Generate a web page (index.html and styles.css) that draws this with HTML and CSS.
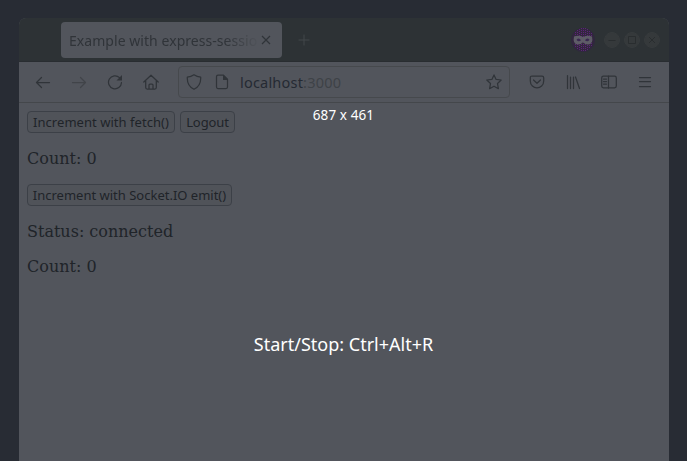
FILE: index.html
```html
<!DOCTYPE html>
<html lang="en">
<head>
<meta charset="utf-8">
<title>Example with express-session</title>
<link rel="stylesheet" href="styles.css">
</head>
<body>
<div class="window">
  <header class="titlebar">
    <div class="tab"><span class="tab-title">Example with express-session</span>
      <svg class="tab-close" width="10" height="10" viewBox="0 0 10 10"><path d="M1 1l8 8M9 1L1 9"/></svg>
    </div>
    <svg class="new-tab" width="12" height="12" viewBox="0 0 12 12"><path d="M6 .5v11M.5 6h11"/></svg>
    <div class="controls">
      <svg class="mask" width="26" height="26" viewBox="0 0 26 26">
        <circle cx="13" cy="13" r="12" fill="#30283f"/>
        <circle class="weave" cx="13" cy="12.500" r="11"/>
        <path class="weave-lines" d="M5.500 5v16M7.500 3v20M9.500 2v22M11.500 1v23M13.500 1v23M15.500 1v23M17.500 2v22M19.500 4v18M21.500 6v14"/>
        <path d="M4 9.500q5-1.600 9 .5q5-2.100 9-.5q1.600 7.700-4 8q-3 0-5-2.200q-2 2.200-5 2.200q-5.600-.300-4-8z" fill="#5e5c67"/>
        <path d="M6.500 12.700q2.500-2.500 4.500 .500q-2.500 2.500-4.500-.500zM15 13.200q2-3 4.500-.500q-2 3-4.500 .500z" fill="#3a2851"/>
      </svg>
      <svg class="control" width="16" height="16" viewBox="0 0 16 16"><circle cx="8" cy="8" r="7.500"/><path d="M4.500 8.500h7"/></svg>
      <svg class="control" width="16" height="16" viewBox="0 0 16 16"><circle cx="8" cy="8" r="7.500"/><path d="M4.500 4.500h7v7h-7z"/></svg>
      <svg class="control" width="16" height="16" viewBox="0 0 16 16"><circle cx="8" cy="8" r="7.500"/><path d="M5 5l6 6M11 5l-6 6"/></svg>
    </div>
  </header>
  <nav class="toolbar">
    <div class="nav-icons">
      <svg class="icon" width="16" height="16" viewBox="0 0 16 16"><path d="M14.500 8.500H1.500M6.500 3.500L1.500 8.500L6.500 13.500"/></svg>
      <svg class="icon faint" width="16" height="16" viewBox="0 0 16 16"><path d="M1.500 8.500h13M9.500 3.500L14.500 8.500L9.500 13.500"/></svg>
      <svg class="icon" width="16" height="16" viewBox="0 0 16 16"><path d="M12.500 3.600A6.500 6.500 0 1 0 14.500 8.500"/><path class="solid" d="M15 1v5.500H9.500z"/></svg>
      <svg class="icon" width="16" height="16" viewBox="0 0 16 16"><path d="M.800 8L8 1.200L15.200 8M2.700 7v6.500q0 1.500 1.500 1.500h7.600q1.500 0 1.500-1.500V7M6 15v-4q0-1 1-1h2q1 0 1 1v4"/></svg>
    </div>
    <div class="address">
      <svg class="icon" width="16" height="16" viewBox="0 0 16 16"><path d="M8 .800Q11 2.800 14.700 3.200C15 9 12.500 13 8 15.300C3.500 13 1 9 1.300 3.200Q5 2.800 8 .800z"/></svg>
      <svg class="icon page-icon" width="16" height="16" viewBox="0 0 16 16"><path d="M4 1.200h5.500L13.500 5.200V13q0 1.500-1.500 1.500H4Q2.500 14.500 2.500 13V2.700Q2.500 1.200 4 1.200z"/><path class="solid" d="M9 1v5h5z"/></svg>
      <span class="url">localhost<span class="port">:3000</span></span>
      <svg class="icon star" width="16" height="16" viewBox="0 0 16 16"><path d="M8 .900l2.100 4.500l5.100.600l-3.700 3.500l.900 5.200L8 12.200l-4.400 2.500l.900-5.200L.800 6l5.100-.600z"/></svg>
    </div>
    <div class="tools">
      <svg class="icon" width="16" height="16" viewBox="0 0 16 16"><path d="M3 2h10q1.700 0 1.700 1.700V7c0 9-13.400 9-13.400 0V3.700Q1.300 2 3 2zM4.500 6L8 9.300L11.500 6"/></svg>
      <svg class="icon" width="16" height="16" viewBox="0 0 16 16"><path d="M2.500 1.500v13M5.500 3v11.500M8.500 3v11.500M10.500 3l4 11.500"/></svg>
      <svg class="icon" width="16" height="16" viewBox="0 0 16 16"><rect x=".700" y="2.200" width="14.600" height="11.600" rx="1.700"/><path d="M7.500 2v12M2.500 5h3M2.500 7.500h3M2.500 10h3"/></svg>
      <svg class="icon" width="16" height="16" viewBox="0 0 16 16"><path d="M2.500 3.500h11M2.500 7.500h11M2.500 12.500h11"/></svg>
    </div>
  </nav>
  <main class="content">
    <div class="row"><button class="fetch">Increment with fetch()</button><button class="logout">Logout</button></div>
    <p>Count: 0</p>
    <div class="row"><button class="emit">Increment with Socket.IO emit()</button></div>
    <p>Status: connected</p>
    <p>Count: 0</p>
  </main>
</div>
<div class="dimensions">687 x 461</div>
<div class="shortcut">Start/Stop: Ctrl+Alt+R</div>
</body>
</html>
```

FILE: styles.css
```css
* { box-sizing: border-box; }
body {
  margin: 0;
  height: 461px;
  overflow: hidden;
  padding: 18px 18px 0 19px;
  background: #282c34;
  font-family: "Noto Sans", sans-serif;
}
svg { display: block; flex: none; fill: none; }
.window { height: 443px; background: #52555c; border-radius: 7px 7px 0 0; overflow: hidden; }
.titlebar {
  height: 44px;
  display: flex;
  align-items: center;
  padding: 0 9px 0 42px;
  background: #2d3235;
  border-bottom: 1px solid #292d31;
}
.tab {
  width: 221px;
  height: 36px;
  display: flex;
  align-items: center;
  padding: 0 11px 0 8px;
  border-radius: 4px;
  background: #52555c;
}
.tab-title {
  width: 189px;
  margin-right: 3px;
  padding-top: 1px;
  overflow: hidden;
  white-space: nowrap;
  font-size: 14px;
  letter-spacing: .05px;
  color: #303439;
  -webkit-mask-image: linear-gradient(90deg, #000 155px, transparent 191px);
  mask-image: linear-gradient(90deg, #000 155px, transparent 191px);
}
.tab-close { stroke: #303439; stroke-width: 1.2; }
.new-tab { margin-left: 16px; stroke: #42474a; }
.controls { margin-left: auto; display: flex; align-items: center; gap: 4px; }
.mask { margin-right: 4px; }
.weave { fill: #33273f; }
.weave-lines { stroke: #5c2378; stroke-dasharray: 1 1; }
.control circle { fill: #35393b; stroke: #373b3d; }
.control path { stroke: #292d2f; }
.toolbar {
  height: 41px;
  display: flex;
  align-items: center;
  padding: 0 16px;
  border-bottom: 1px solid #44474b;
}
.nav-icons { display: flex; gap: 20px; width: 143px; }
.icon { stroke: #303439; stroke-width: 1.25; stroke-linejoin: round; stroke-linecap: round; }
.icon .solid { fill: #303439; stroke: none; }
.faint { stroke: #414449; }
.address {
  width: 332px;
  height: 32px;
  display: flex;
  align-items: center;
  padding: 0 7px;
  border: 1px solid #46494d;
  border-radius: 4px;
}
.page-icon { margin-left: 12px; }
.url { margin-left: 10px; font-size: 14.5px; line-height: 20px; letter-spacing: .2px; color: #252a33; }
.port { color: #3e4247; }
.star { margin-left: auto; }
.tools { margin-left: 19px; display: flex; gap: 20px; }
.content { padding: 8px; font: 16px/19px "DejaVu Serif", serif; color: #202429; }
.content p { margin: 16px 0; }
.row { display: flex; gap: 5px; height: 22px; }
button {
  height: 22px;
  padding: 0;
  border: 1px solid #3c4047;
  border-radius: 4px;
  background: #505359;
  color: #202429;
  font: 13px/20px "Noto Sans", sans-serif;
  white-space: nowrap;
}
.fetch { width: 148px; letter-spacing: .04px; }
.logout { width: 55px; letter-spacing: -.1px; }
.emit { width: 205px; letter-spacing: 0; }
.dimensions, .shortcut { position: absolute; left: 0; width: 687px; text-align: center; color: #fff; white-space: nowrap; }
.dimensions { top: 105px; font-size: 13.5px; line-height: 20px; letter-spacing: .1px; }
.shortcut { top: 332px; font-size: 18px; line-height: 25px; }
```
